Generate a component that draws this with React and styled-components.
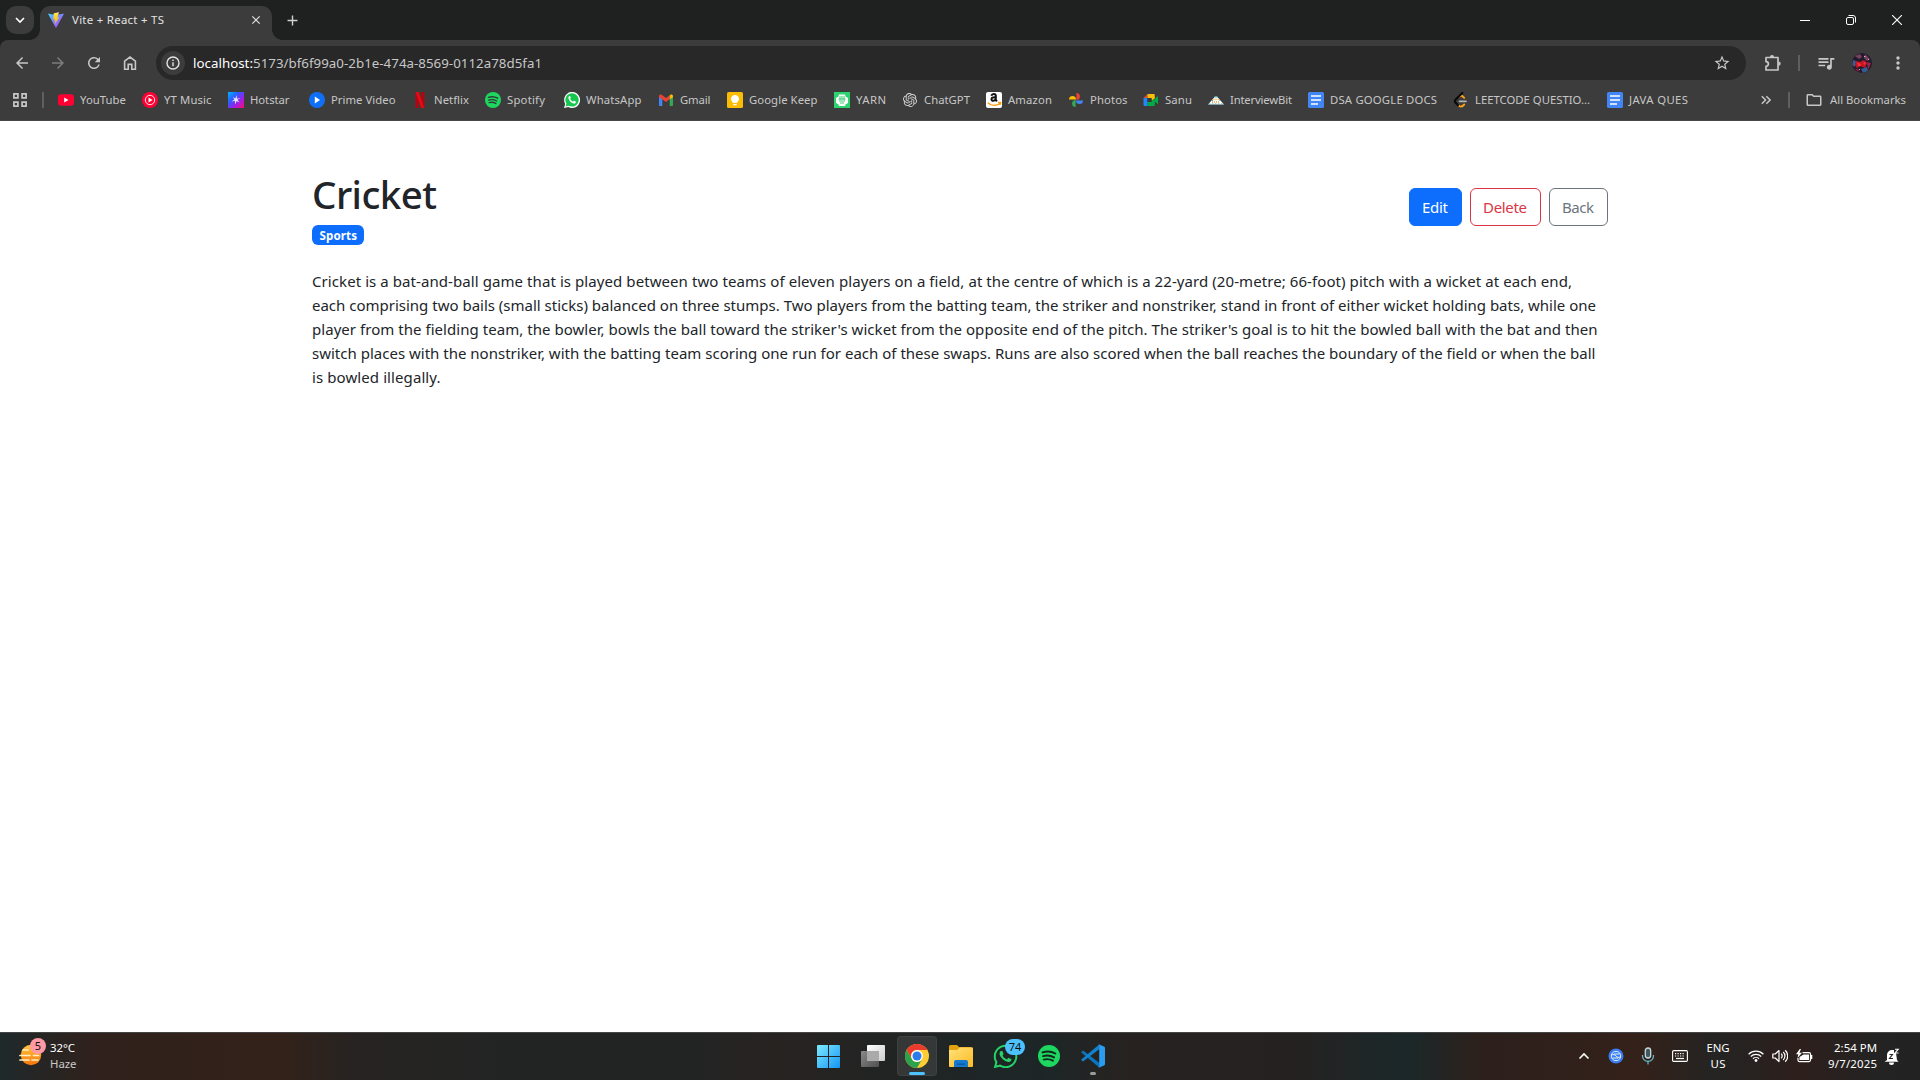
import React, { useLayoutEffect, useRef, useState } from "react";
import styled, { createGlobalStyle } from "styled-components";
import {
  MdArrowBack, MdArrowForward, MdRefresh, MdStarBorder,
  MdQueueMusic, MdMoreVert, MdOutlineFolder, MdClose, MdAdd,
} from "react-icons/md";
import { FaWhatsapp } from "react-icons/fa";
import { SiOpenai } from "react-icons/si";

const FONT = `"Segoe UI", "Noto Sans", "Open Sans", sans-serif`;

const GlobalStyle = createGlobalStyle`
  *, *::before, *::after { box-sizing: border-box; }
  html, body { margin: 0; padding: 0; overflow: hidden; }
  body { font-family: ${FONT}; background: #fff; }
  svg { display: block; flex: none; }
`;

/* ---------- text set to an exact measure ---------- */

const Measure = styled.span`
  display: block;
  flex: none;
  white-space: nowrap;
`;

function Fit({ width, children }) {
  const ref = useRef(null);
  const [spacing, setSpacing] = useState(0);
  useLayoutEffect(() => {
    const range = document.createRange();
    range.selectNodeContents(ref.current);
    const natural = range.getBoundingClientRect().width;
    const count = ref.current.textContent.length;
    setSpacing((width - natural) / Math.max(1, count - 1));
  }, [width]);
  return (
    <Measure ref={ref} style={{ width, letterSpacing: spacing }}>
      {children}
    </Measure>
  );
}

/* ---------- browser frame ---------- */

const Screen = styled.div`
  display: flex;
  flex-direction: column;
  width: 1920px;
  height: 1080px;
  background: #fff;
`;

const Frame = styled.header`
  flex: none;
  background: #1f2020;
`;

const TabStrip = styled.div`
  display: flex;
  height: 40px;
  padding: 6px 0 0 6px;
`;

const TabSearch = styled.div`
  display: grid;
  place-items: center;
  width: 28px;
  height: 28px;
  border-radius: 10px;
  background: #3c3c3c;
`;

const Tab = styled.div`
  position: relative;
  display: flex;
  align-items: center;
  width: 232px;
  height: 34px;
  margin-left: 6px;
  padding: 0 9px 6px 8px;
  border-radius: 10px 10px 0 0;
  background: #3c3c3c;
  color: #e3e3e3;
  font-size: 11.4px;
  line-height: 16px;

  &::before, &::after {
    content: "";
    position: absolute;
    bottom: 0;
    width: 10px;
    height: 10px;
  }
  &::before {
    left: -10px;
    background: radial-gradient(circle at 0 0, transparent 9.5px, #3c3c3c 10px);
  }
  &::after {
    right: -10px;
    background: radial-gradient(circle at 100% 0, transparent 9.5px, #3c3c3c 10px);
  }
`;

const TabTitle = styled.div`
  flex: 1;
  margin-left: 8px;
`;

const NewTab = styled.div`
  display: grid;
  place-items: center;
  width: 28px;
  height: 28px;
  margin-left: 6px;
  color: #d0d0d0;
`;

const WindowControls = styled.div`
  display: flex;
  margin-left: auto;
`;

const WindowButton = styled.div`
  display: grid;
  place-items: center;
  width: 46px;
  height: 28px;
`;

const Toolbar = styled.div`
  display: flex;
  align-items: center;
  height: 46px;
  padding: 0 4px;
  border-radius: 8px 8px 0 0;
  background: #3c3c3c;
  color: #c7c7c7;
`;

const ToolButton = styled.div`
  display: grid;
  place-items: center;
  flex: none;
  width: 36px;
  height: 34px;
  color: ${(p) => (p.$dim ? "#7c7c7c" : "#c7c7c7")};
`;

const Omnibox = styled.div`
  display: flex;
  align-items: center;
  flex: none;
  width: 1590px;
  height: 34px;
  margin: 0 9px 0 8px;
  padding: 0 15px 0 5px;
  border-radius: 17px;
  background: #282828;
`;

const SiteInfo = styled.div`
  display: grid;
  place-items: center;
  width: 24px;
  height: 24px;
  margin-right: 8px;
  border-radius: 50%;
  background: #3c3c3c;
`;

const Address = styled.div`
  flex: 1;
  font-size: 13.3px;
  line-height: 20px;
  color: #c7c7c7;
`;

const Host = styled.span`
  color: #fff;
`;

const Separator = styled.div`
  flex: none;
  width: 2px;
  height: 16px;
  margin: ${(p) => p.$margin};
  background: #5f5f5f;
`;

const Avatar = styled.div`
  width: 20px;
  height: 20px;
  border-radius: 50%;
  overflow: hidden;
`;

const BookmarkBar = styled.nav`
  display: flex;
  align-items: center;
  height: 35px;
  padding: 0 14px 7px 13px;
  background: #3c3c3c;
  border-bottom: 1px solid #474747;
  color: #c7c7c7;
  font-size: 11.3px;
  line-height: 16px;
`;

const BookmarkItem = styled.div`
  display: flex;
  align-items: center;
  flex: none;
  gap: 6px;
  width: ${(p) => p.$width}px;
`;

const BookmarkIcon = styled.span`
  display: grid;
  place-items: center;
  width: 16px;
  height: 16px;
`;

const BookmarkEnd = styled.div`
  display: flex;
  align-items: center;
  margin-left: auto;
`;

const AllBookmarks = styled.div`
  display: flex;
  align-items: center;
  gap: 7px;
`;

/* ---------- page ---------- */

const Page = styled.main`
  flex: 1;
  min-height: 0;
  padding-top: 48px;
  color: #212529;
`;

const Container = styled.div`
  width: 1320px;
  margin: 0 auto;
  padding: 0 12px;
`;

const NoteHeader = styled.div`
  display: flex;
  align-items: center;
  justify-content: space-between;
  height: 76px;
  margin-bottom: 24px;
`;

const Title = styled.h1`
  margin: 0 0 8px;
  padding-top: 2px;
  font-size: 38.5px;
  font-weight: 500;
  line-height: 46px;
`;

const Badge = styled.span`
  display: block;
  width: 52px;
  height: 20px;
  padding: 1px 7.5px 0;
  border-radius: 6px;
  background: #0d6efd;
  color: #fff;
  font-size: 11.6px;
  font-weight: 700;
  line-height: 19px;
`;

const Actions = styled.div`
  display: flex;
  gap: 8px;
`;

const TONES = {
  primary: ["#0d6efd", "#fff", "#0d6efd"],
  danger: ["#fff", "#dc3545", "#dc3545"],
  secondary: ["#fff", "#6c757d", "#6c757d"],
};

const Button = styled.button`
  height: 38px;
  padding: 6px 13px 6px 12px;
  border: 1px solid ${(p) => TONES[p.$tone][2]};
  border-radius: 6px;
  background: ${(p) => TONES[p.$tone][0]};
  color: ${(p) => TONES[p.$tone][1]};
  font-family: inherit;
  font-size: 15px;
  line-height: 24px;
  text-align: left;
`;

const Body = styled.p`
  margin: 0;
  font-size: 15px;
  line-height: 24px;
`;

/* ---------- taskbar ---------- */

const Taskbar = styled.footer`
  display: flex;
  flex: none;
  height: 48px;
  border-top: 1px solid #454545;
  background: linear-gradient(90deg,
    #1f292a 0, #30211c 95px, #33221a 280px, #262322 360px, #222423 500px,
    #222423 700px, #282321 780px, #212423 880px, #1d2627 1040px, #272220 1130px,
    #242221 1300px, #1b2829 1405px, #2c201c 1480px, #34211a 1640px,
    #242423 1715px, #2d1f1c 1800px, #232323 1880px, #222 1920px);
  color: #fff;
  font-size: 11.4px;
  line-height: 16px;
`;

const Weather = styled.div`
  display: flex;
  width: 809px;
  padding: 7px 0 0 18px;
  gap: 8px;
`;

const IconWithCount = styled.div`
  position: relative;
`;

const Count = styled.span`
  position: absolute;
  left: ${(p) => p.$left}px;
  top: ${(p) => p.$top}px;
  display: grid;
  place-items: center;
  width: ${(p) => p.$width}px;
  height: 16px;
  border-radius: 8px;
  background: ${(p) => p.$color};
  color: #111;
  font-size: 11px;
  line-height: 16px;
`;

const Stack = styled.div`
  display: flex;
  flex-direction: column;
  align-items: ${(p) => p.$align || "flex-start"};
`;

const Muted = styled.div`
  color: #c9c9c9;
`;

const Apps = styled.div`
  display: flex;
  gap: 4px;
  padding-top: 3px;
`;

const AppButton = styled.div`
  position: relative;
  display: grid;
  place-items: center;
  width: 40px;
  height: 40px;
  border-radius: 4px;
  background: ${(p) => (p.$active ? "rgba(255,255,255,.09)" : "transparent")};
  box-shadow: ${(p) => (p.$active ? "inset 0 0 0 1px rgba(255,255,255,.05)" : "none")};

  &::after {
    content: "";
    position: absolute;
    bottom: 1px;
    left: 50%;
    width: ${(p) => (p.$active ? 16 : p.$running ? 6 : 0)}px;
    height: 3px;
    border-radius: 2px;
    transform: translateX(-50%);
    background: ${(p) => (p.$active ? "#4cc2ff" : "#9a9a9a")};
  }
`;

const Tray = styled.div`
  display: flex;
  align-items: center;
  margin-left: auto;
  padding: 0 13px 1px 0;
`;

const TraySlot = styled.div`
  display: grid;
  place-items: center;
  flex: none;
  width: ${(p) => p.$width}px;
`;

const Clock = styled(Stack)`
  width: 57px;
`;

/* ---------- drawings ---------- */

const ViteLogo = () => (
  <svg width="16" height="16" viewBox="0 0 32 32">
    <defs>
      <linearGradient id="v1" x1="0" y1="0" x2="1" y2="1"><stop stopColor="#41d1ff" /><stop offset="1" stopColor="#bd34fe" /></linearGradient>
      <linearGradient id="v2" x1="0" y1="0" x2="0" y2="1"><stop stopColor="#ffea83" /><stop offset=".2" stopColor="#ffdd35" /><stop offset="1" stopColor="#ffa800" /></linearGradient>
    </defs>
    <path fill="url(#v1)" d="M31.2 5 17 30.600a1.200 1.200 0 0 1-2 0L.8 5a1.100 1.100 0 0 1 1.200-1.700L16 5.800l14-2.500A1.100 1.100 0 0 1 31.200 5z" />
    <path fill="url(#v2)" d="M22 .5 11.500 2.600l-.7 11.800 3-.6-1 5 2.200-.6-1.600 7 9-14.800-3.800.8z" />
  </svg>
);

const InfoIcon = () => (
  <svg width="14" height="14" viewBox="0 0 14 14" fill="none" stroke="#e3e3e3" strokeWidth="1.400">
    <circle cx="7" cy="7" r="6" /><path d="M7 6.200v4M7 3.600v1.500" />
  </svg>
);

const HomeIcon = () => (
  <svg width="14" height="14" viewBox="0 0 14 14" fill="none" stroke="#c7c7c7" strokeWidth="1.600">
    <path d="M1.600 13.200V5.200L7 1.100l5.400 4.100v8H8.800V8.400H5.200v4.800z" />
  </svg>
);

const PuzzleIcon = () => (
  <svg width="18" height="18" viewBox="0 0 18 18">
    <path fill="none" stroke="#c7c7c7" strokeWidth="1.700" strokeLinejoin="round" d="M2 3.500h12V16H2v-3.600a2.400 2.400 0 0 0 0-4.800z" />
    <path fill="#c7c7c7" d="M5.900 3.200a2.100 2.100 0 0 1 4.200 0zM14.500 7.400a2.200 2.200 0 0 1 0 4.400z" />
  </svg>
);

const AppsGrid = () => (
  <svg width="14" height="14" fill="none" stroke="#c7c7c7" strokeWidth="1.700">
    <path d="M.9.900h4v4h-4zM9.100.900h4v4h-4zM.9 9.100h4v4h-4zM9.100 9.100h4v4h-4z" />
  </svg>
);

const AvatarArt = () => (
  <svg width="20" height="20">
    <rect width="20" height="20" fill="#231a2c" />
    <path fill="#74435f" d="M3 3l5-2 2 3-3 2zM13 1l5 5-3 2-3-3z" />
    <path fill="#345d91" d="M1 7l3 1-1 6-3-2zM9 16l6-2 1 4-5 2z" />
    <path fill="#c51628" d="M4 8l4 1 4-2 3 3-2 5-4-2-4 2-2-3z" />
    <path fill="#ff3030" d="M5 9.500l3 1 1.500 2-3 .5zM11 10l3-1-1 3z" />
    <path fill="#9b244b" d="M15 9l4 1-3 7zM3 15l4 2-1 2z" />
    <path fill="#e3a9b9" d="M12 3h1.500v1H12zM7 16h1v1H7zM16 6h1v1h-1z" />
  </svg>
);

const Svg16 = ({ children }) => <svg width="16" height="16" viewBox="0 0 16 16">{children}</svg>;

const YouTube = () => <Svg16><rect y="2.200" width="16" height="11.600" rx="3" fill="#ff0033" /><path d="M6.200 5.600v4.800L10.500 8z" fill="#fff" /></Svg16>;
const YTMusic = () => <Svg16><circle cx="8" cy="8" r="8" fill="#ff0033" /><circle cx="8" cy="8" r="4.700" fill="none" stroke="#fff" strokeWidth=".9" /><path d="M6.500 5.500v5L10.600 8z" fill="#fff" /></Svg16>;
const Hotstar = () => (
  <Svg16>
    <defs><linearGradient id="hs" x1="0" y1="0" x2="1" y2="1"><stop stopColor="#00b5ff" /><stop offset=".35" stopColor="#2b5cff" /><stop offset=".65" stopColor="#a01ee8" /><stop offset="1" stopColor="#ff0a70" /></linearGradient></defs>
    <rect width="16" height="16" fill="url(#hs)" />
    <path d="M8.500 3l.5 3.800 3.600-.9-3.100 1.900 2 2.700-2.900-1.600-1.500 3.600-.2-3.800-3.500.7 3-1.800-1.600-2.500 2.600 1.400z" fill="#e8e8ff" />
  </Svg16>
);
const Prime = () => <Svg16><circle cx="8" cy="8" r="8" fill="#0f70f7" /><path d="M5.800 4.500v7L11 8z" fill="#fff" /></Svg16>;
const Netflix = () => <Svg16><path fill="#b1060f" d="M3.500 0h3.200v16l-3.200.3zM9.300 0h3.200v16.300L9.300 16z" /><path fill="#e50914" d="M3.500 0h3.200l5.800 16.300-3.200-.3z" /></Svg16>;
const Spotify = ({ size = 16 }) => (
  <svg width={size} height={size} viewBox="0 0 16 16"><circle cx="8" cy="8" r="8" fill="#1ed760" />
    <path fill="none" stroke={size > 16 ? "#14251c" : "#303c35"} strokeLinecap="round" strokeWidth="1.400" d="M3.300 5.400c3-1 6.600-.7 9.300.8M3.700 8.100c2.700-.8 5.700-.4 8 .9M4.200 10.600c2.200-.6 4.600-.3 6.600.8" /></svg>
);
const WhatsAppMark = () => (
  <Svg16>
    <path fill="#fff" d="M0 16l1.200-4A8 8 0 1 1 4.300 15z" />
    <path fill="#17c64f" d="M1.600 14.400l.8-2.800a6.700 6.700 0 1 1 2.400 2.200z" />
    <path fill="#fff" d="M5.400 4.100c-.9.500-1.200 1.600-.7 2.800.8 2 2.400 3.700 4.600 4.500 1.300.4 2.300 0 2.600-1.100.1-.5 0-.7-.4-.9l-1.200-.6c-.4-.1-.5 0-.8.4-.4.5-.6.5-1 .2C7.300 8.800 6.600 7.900 6.200 7.100c-.2-.4 0-.6.300-.9.300-.4.300-.5.1-1L6.200 4.300c-.2-.3-.5-.3-.8-.2z" />
  </Svg16>
);
const Gmail = () => <Svg16><path fill="#4285f4" d="M1 4.500l3.300 2.400V14H2a1 1 0 0 1-1-1z" /><path fill="#34a853" d="M15 4.500l-3.300 2.400V14H14a1 1 0 0 0 1-1z" /><path fill="#ea4335" d="M1 4.500C1 2.500 3 2 4.300 3.200L8 6l3.700-2.800v3.900L8 9.900 1 4.900z" /><path fill="#fbbc04" d="M11.700 3.200C13 2 15 2.500 15 4.500v.4l-3.300 2.500z" /></Svg16>;
const Keep = () => <Svg16><rect width="16" height="16" rx="1.500" fill="#fbbc04" /><path fill="#fff" d="M8 3a4 4 0 0 0-2.200 7.300V11h4.400v-.7A4 4 0 0 0 8 3zM6.300 12h3.400v1.300H6.300z" /></Svg16>;
const Yarn = () => <Svg16><rect width="16" height="16" fill="#2bd46f" /><path fill="#fff" d="M5 2.500h6l.5 2L14 6v5l-2.500 1.500-.5 1.500H5l-.5-1.500L2 11V6l2.500-1.500z" /><path stroke="#2bc768" fill="none" strokeWidth=".9" d="M6 4v4M8 4v3.500M10 4v4M5 9h6M6 11h4M4.500 7h7" /></Svg16>;
const ChatGPT = () => <SiOpenai size={14} color="#d6d6d6" />;
const Amazon = () => <Svg16><rect width="16" height="16" rx="2" fill="#fff" /><path fill="none" stroke="#111" strokeWidth="2" d="M5.300 3.800C6 1.500 9.800 1.300 9.800 3.700v4.200l1.200 1.400M9.500 5.200C6.300 5 5.500 6 5.500 7.200c0 2.400 3.500 2 4.200-.4" /><path fill="none" stroke="#ff9900" strokeWidth="1.300" d="M1.700 10.700c3.600 3.100 8.600 3.300 12.500.8M12 10.500l2.600.2-.7 2.300" /></Svg16>;
const Photos = () => <Svg16><path fill="#fbbc04" d="M1 7.600a3.500 3.500 0 0 1 7 0z" /><path fill="#ea4335" d="M8.400 1a3.500 3.500 0 0 1 0 7z" /><path fill="#4285f4" d="M15 8.400a3.500 3.500 0 0 1-7 0z" /><path fill="#34a853" d="M7.600 15a3.500 3.500 0 0 1 0-7z" /></Svg16>;
const Meet = () => <Svg16><path fill="#ea4335" d="M.5 6L4.500 2v4z" /><path fill="#fbbc04" d="M4.500 2h6c.8 0 1.300.5 1.300 1.300V6.500L8.500 8.800V6h-4z" /><path fill="#2684fc" d="M.5 6h4v8H1.800c-.8 0-1.300-.5-1.300-1.300z" /><path fill="#00ac47" d="M4.500 10h4V8.500l3.300-1.200v5.400c0 .8-.5 1.300-1.300 1.300h-6zM11.800 6.700L15 4v8.200l-3.200-2.600z" /><path fill="#2b3c34" d="M4.500 6h4v4h-4z" /></Svg16>;
const InterviewBit = () => <Svg16><path fill="#fff" d="M0 12.500L4 8l3-3.500h2L12 8l4 4.500z" /><path stroke="#39aebf" strokeWidth="1" d="M6.500 5h3M1 12h1.500M4 12h1.500M7 12h1.500M10 12h1.500M13 12h1.500M4 8.500h1M11.500 8.500h1" /><path stroke="#f6a33c" strokeWidth="1.300" strokeDasharray="1 1" d="M5.500 7.500h5.500M4 10h8" /></Svg16>;
const Docs = () => <Svg16><rect width="16" height="16" rx="1.500" fill="#4285f4" /><path fill="#fff" d="M3 3.200h10v1.600H3zM3 7.200h10v1.600H3zM3 11.200h7v1.600H3z" /></Svg16>;
const LeetCode = () => <Svg16><path fill="none" stroke="#ffa116" strokeLinecap="round" strokeWidth="1.900" d="M6.500 4.500c1.300-1 2.600-.8 3.700.3l1 1M5.200 13.200c1.800 1.800 3.600 1.800 5 .3l1-1" /><path fill="none" stroke="#0a0a0a" strokeLinecap="round" strokeWidth="2.100" d="M9.300 1L2.700 7.500c-1 1-.9 2.400.1 3.400L5 13.200" /><path stroke="#b3b3b3" strokeLinecap="round" strokeWidth="1.700" d="M6.500 9.300h6.500" /></Svg16>;

const Haze = () => (
  <svg width="24" height="30" viewBox="0 0 24 30">
    <defs><linearGradient id="hz" x1="0" y1="0" x2="0" y2="1"><stop stopColor="#ffc83d" /><stop offset="1" stopColor="#f7750b" /></linearGradient></defs>
    <circle cx="13" cy="15" r="10.200" fill="url(#hz)" />
    <path stroke="#fff0c2" strokeLinecap="round" strokeWidth="1.700" d="M5 10h5M2 15.500h10M15.500 15.500h5M2 20h9M14 20h6" />
  </svg>
);
const Windows = () => <svg width="24" height="23"><defs><linearGradient id="wn" x1="0" y1="0" x2="23" y2="23" gradientUnits="userSpaceOnUse"><stop stopColor="#7eeaff" /><stop offset="1" stopColor="#1495f5" /></linearGradient></defs><path fill="url(#wn)" d="M0 1a1 1 0 0 1 1-1h10v11H0zM12 0h10a1 1 0 0 1 1 1v10H12zM0 12h11v11H1a1 1 0 0 1-1-1zM12 12h11v10a1 1 0 0 1-1 1H12z" /></svg>;
const TaskView = () => <svg width="24" height="22"><defs><linearGradient id="t1" x1="0" y1="0" x2="1" y2="1"><stop stopColor="#fff" /><stop offset="1" stopColor="#ccc" /></linearGradient><linearGradient id="t2" x1="0" y1="0" x2="1" y2="1"><stop stopColor="#8a8a8a" /><stop offset="1" stopColor="#505050" /></linearGradient></defs><rect y="6" width="18" height="16" rx="1" fill="url(#t2)" /><rect x="6" width="18" height="16" rx="1" fill="url(#t1)" /><path fill="#aaa" d="M6 6h12v10H7a1 1 0 0 1-1-1z" /></svg>;
const Chrome = () => (
  <svg width="24" height="24" viewBox="0 0 24 24">
    <circle cx="12" cy="12" r="12" fill="#fc3" />
    <path fill="#ea3b2e" d="M1.600 6A12 12 0 0 1 22.400 6H12a6 6 0 0 0-5.200 9z" />
    <path fill="#2ba24c" d="M1.600 6A12 12 0 0 0 12 24l5.200-9a6 6 0 0 1-10.400 0z" />
    <circle cx="12" cy="12" r="5.900" fill="#fff" /><circle cx="12" cy="12" r="4.500" fill="#2c7be9" />
  </svg>
);
const Explorer = () => <svg width="24" height="22"><defs><linearGradient id="ex" x1="0" y1="0" x2="1" y2="1"><stop stopColor="#ffe17a" /><stop offset="1" stopColor="#fdbb24" /></linearGradient></defs><path fill="#e2a10f" d="M0 1.500A1.500 1.500 0 0 1 1.500 0H8l2 2h12.500v8H0z" /><path fill="url(#ex)" d="M0 5h8l3-2.600h12.500a.5.500 0 0 1 .5.600V21a1 1 0 0 1-1 1H1a1 1 0 0 1-1-1z" /><path fill="#1479cf" d="M5 22v-5a2 2 0 0 1 2-2h10a2 2 0 0 1 2 2v5z" /><path fill="#0b5ba8" d="M8 18.500h8V20H8z" /></svg>;
const VSCode = () => <svg width="24" height="24" viewBox="0 0 24 24"><path fill="#0a74bd" d="M0 8.200l2-1.800L18.500 19v4.700z" /><path fill="#1380ce" d="M0 15.800l2 1.800L18.500 5V.3z" /><path fill="#2b9df0" d="M17 0l6 2.400c.6.300 1 .8 1 1.500v16.200c0 .7-.4 1.200-1 1.500L17 24c.9-.6 1.200-1 1.200-2V2c0-1-.3-1.400-1.200-2z" /></svg>;

const Chevron = ({ up }) => <svg width="12" height="12" viewBox="0 0 12 12" fill="none" stroke="#fff" strokeWidth="1.600"><path d={up ? "M1.500 8.500L6 4l4.500 4.500" : "M2 4l4 4 4-4"} /></svg>;
const SyncIcon = () => <svg width="16" height="16" viewBox="0 0 16 16"><circle cx="8" cy="8" r="7.500" fill="#377cf1" /><g fill="none" stroke="#e6efff" strokeWidth="1"><circle cx="8" cy="8" r="4.700" /><path d="M3.500 7c2-.8 3.300-.3 4.500 1s2.500 1.800 4.500 1M6 6h5.500M4.500 10h5.500" /></g></svg>;
const Mic = () => <svg width="14" height="18" viewBox="0 0 14 18" fill="none" strokeWidth="1.300"><rect x="4.300" y="1" width="5.400" height="10" rx="2.700" stroke="#c9d6d8" fill="#3f5960" /><path stroke="#63b6cc" d="M1.500 8v1a5.500 5.500 0 0 0 11 0V8M7 14v3.500" /></svg>;
const Keyboard = () => <svg width="16" height="12" fill="none" stroke="#fff"><rect x=".6" y=".6" width="14.800" height="10.800" rx="1.200" strokeWidth="1.100" /><path strokeWidth="1.200" strokeDasharray="1.200 1.300" d="M3 3.700h10M3 6h10" /><path strokeWidth="1.200" d="M4 8.500h8" /></svg>;
const Wifi = () => <svg width="16" height="14" viewBox="0 0 16 14" fill="none" stroke="#fff" strokeWidth="1.200"><path d="M.6 5.200a10.500 10.500 0 0 1 14.800 0M2.800 7.500a7.400 7.400 0 0 1 10.400 0M5 9.700a4.300 4.300 0 0 1 6 0" /><circle cx="8" cy="11.500" r="1.400" fill="#fff" stroke="none" /></svg>;
const Speaker = () => <svg width="16" height="14" viewBox="0 0 16 14" fill="none" stroke="#fff" strokeWidth="1.200" strokeLinejoin="round"><path d="M.8 5v4h2.400L7 12.500v-11L3.200 5zM9.200 4.700a3.500 3.500 0 0 1 0 4.600M11.200 3a5.500 5.500 0 0 1 0 8M13.200 1.200a8 8 0 0 1 0 11.600" /></svg>;
const Battery = () => <svg width="17" height="14" viewBox="0 0 17 14"><path d="M6.500 3.600h6.500a1.500 1.500 0 0 1 1.500 1.500v6a1.500 1.500 0 0 1-1.500 1.500H3.500A1.500 1.500 0 0 1 2 11V9" fill="none" stroke="#fff" strokeWidth="1.200" /><path fill="#fff" d="M3.500 8L7.500 5.400H13V11H3.500zM15 6h1.300v4H15zM3.800 0L0 5.200h2.300L1.500 9 6 3.700H3.400L5 0z" /></svg>;
const Bell = () => <svg width="16" height="17" viewBox="0 0 16 17"><path fill="#fff" d="M3 12V7a5 5 0 0 1 5-5h2v3h2l1 7 1.500 1.800H.5zM5 14.500h5a2.500 2.500 0 0 1-5 0z" /><path fill="none" stroke="#222" strokeWidth="1.100" d="M5.500 6.500h3l-3 4h3.500" /><path fill="none" stroke="#fff" strokeWidth="1.100" d="M11 1.200h3.300L11 5h3.500" /></svg>;

/* ---------- data ---------- */

const BOOKMARKS = [
  ["YouTube", 84, 46, YouTube],
  ["YT Music", 86, 47.5, YTMusic],
  ["Hotstar", 81, 39.5, Hotstar],
  ["Prime Video", 103, 64.5, Prime],
  ["Netflix", 73, 35, Netflix],
  ["Spotify", 79, 38, Spotify],
  ["WhatsApp", 94, 55.5, WhatsAppMark],
  ["Gmail", 69, 30.5, Gmail],
  ["Google Keep", 107, 68.5, Keep],
  ["YARN", 68, 30, Yarn],
  ["ChatGPT", 84, 46, ChatGPT],
  ["Amazon", 82, 44, Amazon],
  ["Photos", 75, 37.5, Photos],
  ["Sanu", 65, 27, Meet],
  ["InterviewBit", 100, 62, InterviewBit],
  ["DSA GOOGLE DOCS", 145, 107, Docs],
  ["LEETCODE QUESTIO...", 154, 115, LeetCode],
  ["JAVA QUES", 90, 59, Docs],
];

const LINES = [
  ["Cricket is a bat-and-ball game that is played between two teams of eleven players on a field, at the centre of which is a 22-yard (20-metre; 66-foot) pitch with a wicket at each end,", 1260],
  ["each comprising two bails (small sticks) balanced on three stumps. Two players from the batting team, the striker and nonstriker, stand in front of either wicket holding bats, while one", 1284],
  ["player from the fielding team, the bowler, bowls the ball toward the striker's wicket from the opposite end of the pitch. The striker's goal is to hit the bowled ball with the bat and then", 1285.5],
  ["switch places with the nonstriker, with the batting team scoring one run for each of these swaps. Runs are also scored when the ball reaches the boundary of the field or when the ball", 1283.5],
  ["is bowled illegally.", 128.5],
];

export default function App() {
  return (
    <>
      <GlobalStyle />
      <Screen>
        <Frame>
          <TabStrip>
            <TabSearch><Chevron /></TabSearch>
            <Tab>
              <ViteLogo />
              <TabTitle><Fit width={92}>Vite + React + TS</Fit></TabTitle>
              <MdClose size={14} color="#e3e3e3" />
            </Tab>
            <NewTab><MdAdd size={17} /></NewTab>
            <WindowControls>
              <WindowButton><svg width="10" height="10" stroke="#fff"><path d="M0 5.500h10" /></svg></WindowButton>
              <WindowButton><svg width="10" height="10" fill="none" stroke="#fff"><rect x=".5" y="2.500" width="7" height="7" rx="1.500" /><path d="M2.500.500H7A2.500 2.500 0 0 1 9.500 3v4.500" /></svg></WindowButton>
              <WindowButton><svg width="10" height="10" stroke="#fff" strokeWidth="1.100"><path d="M0 0l10 10M10 0L0 10" /></svg></WindowButton>
            </WindowControls>
          </TabStrip>
          <Toolbar>
            <ToolButton><MdArrowBack size={18} /></ToolButton>
            <ToolButton $dim><MdArrowForward size={18} /></ToolButton>
            <ToolButton><MdRefresh size={18} /></ToolButton>
            <ToolButton><HomeIcon /></ToolButton>
            <Omnibox>
              <SiteInfo><InfoIcon /></SiteInfo>
              <Address><Fit width={349}><Host>localhost:</Host>5173/bf6f99a0-2b1e-474a-8569-0112a78d5fa1</Fit></Address>
              <MdStarBorder size={18} />
            </Omnibox>
            <ToolButton><PuzzleIcon /></ToolButton>
            <Separator $margin="0 8px 0 7px" />
            <ToolButton><MdQueueMusic size={20} /></ToolButton>
            <ToolButton><Avatar><AvatarArt /></Avatar></ToolButton>
            <ToolButton><MdMoreVert size={20} /></ToolButton>
          </Toolbar>
          <BookmarkBar>
            <AppsGrid />
            <Separator $margin="0 14px 0 15px" />
            {BOOKMARKS.map(([label, width, text, Icon]) => (
              <BookmarkItem key={label} $width={width}>
                <BookmarkIcon><Icon /></BookmarkIcon>
                <Fit width={text}>{label}</Fit>
              </BookmarkItem>
            ))}
            <BookmarkEnd>
              <svg width="10" height="10" fill="none" stroke="#c7c7c7" strokeWidth="1.500"><path d="M.8 1.200L4.600 5 .8 8.800M5.300 1.200L9.100 5 5.300 8.800" /></svg>
              <Separator $margin="0 15px 0 17px" />
              <AllBookmarks>
                <MdOutlineFolder size={18} />
                <Fit width={76}>All Bookmarks</Fit>
              </AllBookmarks>
            </BookmarkEnd>
          </BookmarkBar>
        </Frame>

        <Page>
          <Container>
            <NoteHeader>
              <div>
                <Title><Fit width={125}>Cricket</Fit></Title>
                <Badge><Fit width={37.5}>Sports</Fit></Badge>
              </div>
              <Actions>
                <Button $tone="primary"><Fit width={26}>Edit</Fit></Button>
                <Button $tone="danger"><Fit width={44}>Delete</Fit></Button>
                <Button $tone="secondary"><Fit width={32}>Back</Fit></Button>
              </Actions>
            </NoteHeader>
            <Body>
              {LINES.map(([text, width]) => <Fit key={text} width={width}>{text}</Fit>)}
            </Body>
          </Container>
        </Page>

        <Taskbar>
          <Weather>
            <IconWithCount>
              <Haze />
              <Count $left={12} $top={-2} $width={16} $color="#ff99a4">5</Count>
            </IconWithCount>
            <Stack>
              <Fit width={25}>32°C</Fit>
              <Muted><Fit width={26.5}>Haze</Fit></Muted>
            </Stack>
          </Weather>
          <Apps>
            <AppButton><Windows /></AppButton>
            <AppButton><TaskView /></AppButton>
            <AppButton $active><Chrome /></AppButton>
            <AppButton><Explorer /></AppButton>
            <AppButton>
              <FaWhatsapp size={27} color="#25d366" />
              <Count $left={20} $top={3} $width={20} $color="#4cc2ff">74</Count>
            </AppButton>
            <AppButton><Spotify size={22} /></AppButton>
            <AppButton $running><VSCode /></AppButton>
          </Apps>
          <Tray>
            <TraySlot $width={32}><Chevron up /></TraySlot>
            <TraySlot $width={32}><SyncIcon /></TraySlot>
            <TraySlot $width={32}><Mic /></TraySlot>
            <TraySlot $width={32}><Keyboard /></TraySlot>
            <TraySlot $width={44}>
              <Stack $align="center">
                <Fit width={23}>ENG</Fit>
                <Fit width={15}>US</Fit>
              </Stack>
            </TraySlot>
            <TraySlot $width={32}><Wifi /></TraySlot>
            <TraySlot $width={16}><Speaker /></TraySlot>
            <TraySlot $width={32}><Battery /></TraySlot>
            <Clock $align="flex-end">
              <Fit width={43}>2:54 PM</Fit>
              <Fit width={49}>9/7/2025</Fit>
            </Clock>
            <TraySlot $width={30}><Bell /></TraySlot>
          </Tray>
        </Taskbar>
      </Screen>
    </>
  );
}
